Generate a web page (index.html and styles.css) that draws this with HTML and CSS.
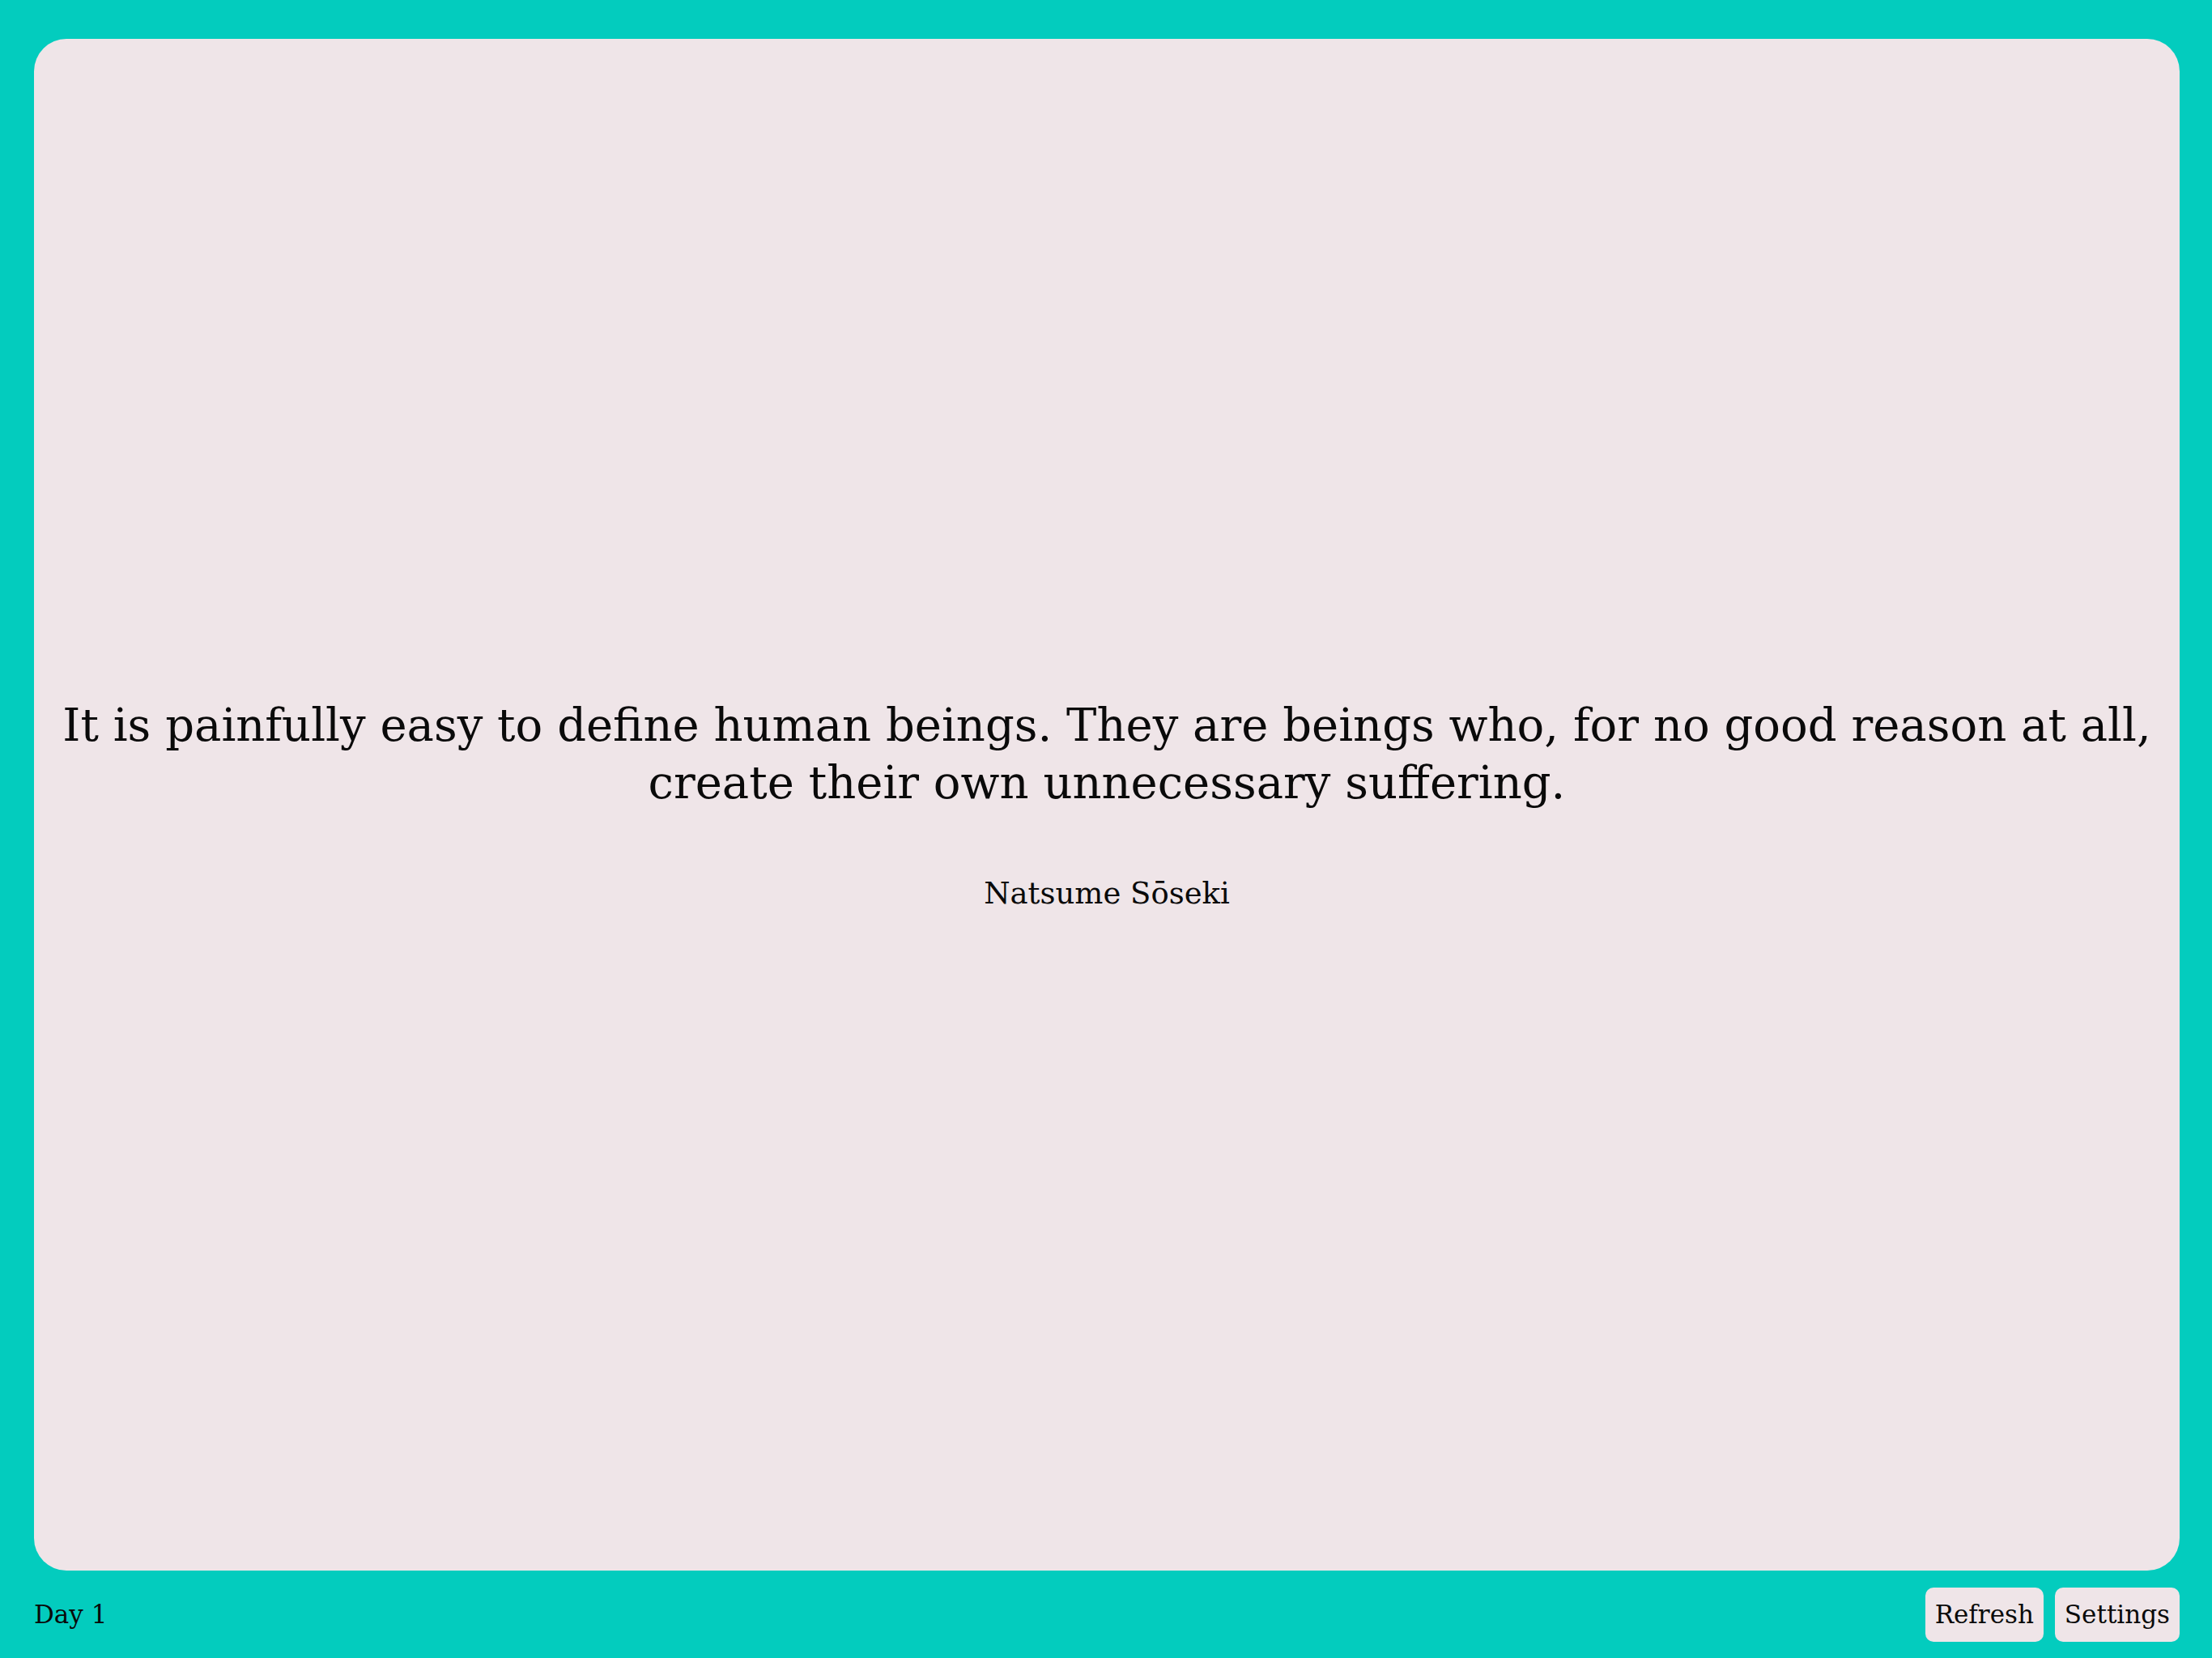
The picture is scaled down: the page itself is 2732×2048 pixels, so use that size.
FILE: index.html
```html
<!DOCTYPE html>
<html lang="en">
<head>
<meta charset="utf-8">
<title>Quote</title>
<link rel="stylesheet" href="styles.css">
</head>
<body>
<div class="app">
  <main class="card">
    <div class="quote-wrap">
      <p class="quote">It is painfully easy to define human beings. They are beings who, for no good reason at all, create their own unnecessary suffering.</p>
      <p class="author">Natsume Sōseki</p>
    </div>
  </main>
  <footer class="footer">
    <span class="day">Day 1</span>
    <div class="actions">
      <button class="btn">Refresh</button>
      <button class="btn">Settings</button>
    </div>
  </footer>
</div>
</body>
</html>
```
FILE: styles.css
```css
html, body {
  margin: 0;
  padding: 0;
  height: 100%;
}
body {
  background: #03ccbe;
  font-family: "DejaVu Serif", "Liberation Serif", serif;
  color: #0a0a0a;
}
.app {
  height: 100vh;
  display: flex;
  flex-direction: column;
  padding: 48px 40px 0 42px;
  box-sizing: border-box;
}
.card {
  flex: 1;
  background: #efe5e8;
  border-radius: 40px;
  display: flex;
  align-items: center;
  justify-content: center;
  padding: 0 20px;
}
.quote-wrap {
  text-align: center;
}
.quote {
  margin: 0;
  font-size: 56px;
  line-height: 71px;
}
.author {
  margin: 78px 0 0;
  font-size: 37px;
  line-height: 48px;
}
.footer {
  height: 108px;
  display: flex;
  align-items: center;
  justify-content: space-between;
}
.day {
  font-size: 31px;
}
.actions {
  display: flex;
  gap: 14px;
}
.btn {
  font-family: inherit;
  font-size: 31px;
  color: #0a0a0a;
  background: #efe5e8;
  border: none;
  border-radius: 10px;
  height: 67px;
  padding: 0 12px;
}
```
